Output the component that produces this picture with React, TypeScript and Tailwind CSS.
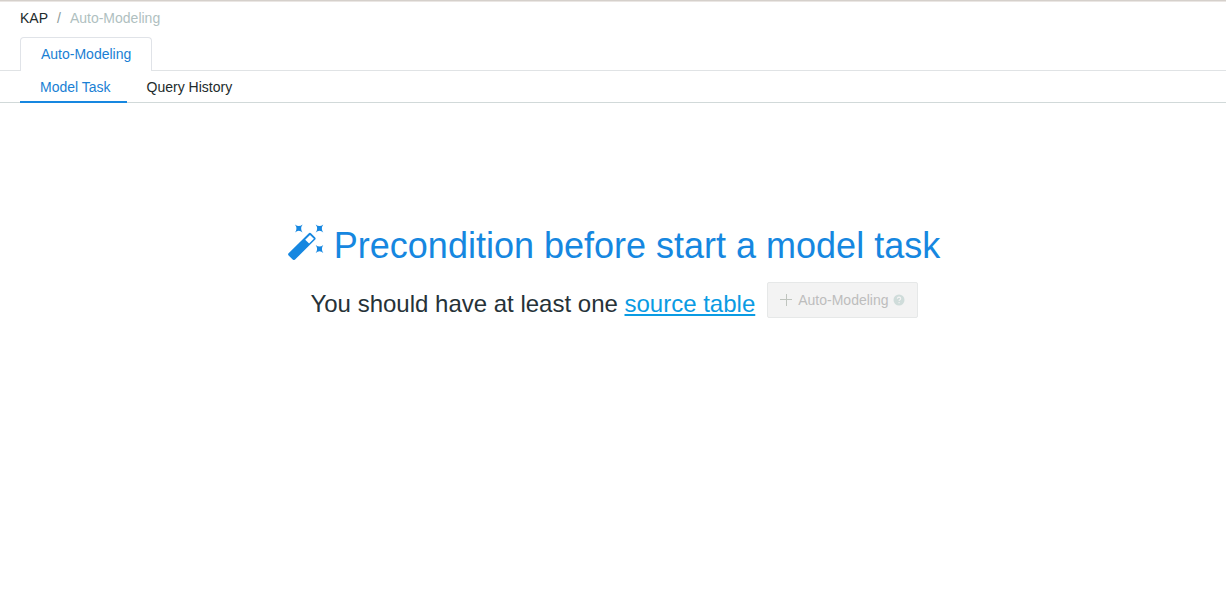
import React from "react";

function WandIcon() {
  return (
    <svg className="h-9 w-9 shrink-0" viewBox="0 0 36 36" fill="#1687e0" aria-hidden="true">
      <path
        fillRule="evenodd"
        d="M20.6 9.4Q21.9 8.1 23.2 9.4L27 13.2Q28.3 14.5 27 15.8L7.1 35.5Q5.9 36.6 4.7 35.5L.6 31.4Q-.5 30.3 .6 29.2ZM22 10.9L17.2 15.7L21.1 19.6L25.9 14.8Z"
      />
      <path d="M7 .4Q10.8 3.5 14.6 .4Q11.8 4.4 14.6 8.4Q10.8 5.3 7 8.4Q9.8 4.4 7 .4Z" />
      <path d="M27.7 .4Q31.5 3.5 35.3 .4Q32.5 4.4 35.3 8.4Q31.5 5.3 27.7 8.4Q30.5 4.4 27.7 .4Z" />
      <path d="M27.7 20.9Q31.5 24 35.3 20.9Q32.5 24.9 35.3 28.9Q31.5 25.8 27.7 28.9Q30.5 24.9 27.7 20.9Z" />
    </svg>
  );
}

function PlusIcon() {
  return (
    <svg className="h-3 w-3 shrink-0" viewBox="0 0 12 12" aria-hidden="true">
      <path d="M6.5 0V12M0 5.5H12" stroke="#bfc4be" strokeWidth="1" />
    </svg>
  );
}

function HelpIcon() {
  return (
    <svg className="h-3 w-3 shrink-0" viewBox="0 0 12 12" aria-hidden="true">
      <circle cx="6" cy="6" r="5.5" fill="#cfdcda" />
      <path d="M4.3 4.7Q4.4 3.1 6 3.1Q7.7 3.2 7.7 4.6Q7.6 5.4 6.7 5.9Q6.1 6.3 6.1 7M6.1 7.9V9.2" fill="none" stroke="#f3f3f3" strokeWidth="1.1" />
    </svg>
  );
}

export default function App() {
  return (
    <div className="min-h-screen border-t border-[#d5d0cb] bg-white font-['Liberation_Sans',Arial,sans-serif] text-sm text-[#1f2d3d]">
      <div className="h-px bg-[#eae6e3]" />
      <nav aria-label="Breadcrumb" className="flex h-8 items-center gap-[9px] px-5">
        <a href="#kap" className="text-[#222b2b]">KAP</a>
        <span className="text-[#8c9a9a]">/</span>
        <span className="text-[#b0bfbf]">Auto-Modeling</span>
      </nav>
      <div role="tablist" aria-label="Section" className="mt-[3px] flex h-[34px] border-b border-[#e0e3e5] px-5">
        <button role="tab" aria-selected="true" className="-mb-px rounded-t border border-b-0 border-[#e0e3e8] bg-white px-5 pb-0.5 text-[#1a7fd4]">
          Auto-Modeling
        </button>
      </div>
      <div role="tablist" aria-label="View" className="flex h-8 border-b border-[#d1d9d9] px-5">
        <button role="tab" aria-selected="true" className="-mb-px border-b-2 border-[#1687e0] pl-5 pr-4 pt-0.5 text-[#1a7fd4]">
          Model Task
        </button>
        <button role="tab" aria-selected="false" className="px-5 text-[#222b2b]">
          Query History
        </button>
      </div>
      <main className="flex flex-col items-center pl-5.5 pr-5 pt-[121px]">
        <h1 className="flex items-start gap-2.5 text-4xl leading-[44px] text-[#1687e0]">
          <WandIcon />
          Precondition before start a model task
        </h1>
        <div className="mt-3 flex items-center gap-3">
          <p className="pt-2 text-2xl text-[#263238]">
            You should have at least one{" "}
            <a href="#source-table" className="text-[#0a9be3] underline decoration-2 underline-offset-2">source table</a>
          </p>
          <button disabled className="flex h-9 items-center rounded-xs border border-[#e6e8e8] bg-[#f3f3f3] px-3 text-[#bdbdbd]">
            <PlusIcon />
            <span className="ml-1.5 mr-1">Auto-Modeling</span>
            <HelpIcon />
          </button>
        </div>
      </main>
    </div>
  );
}
